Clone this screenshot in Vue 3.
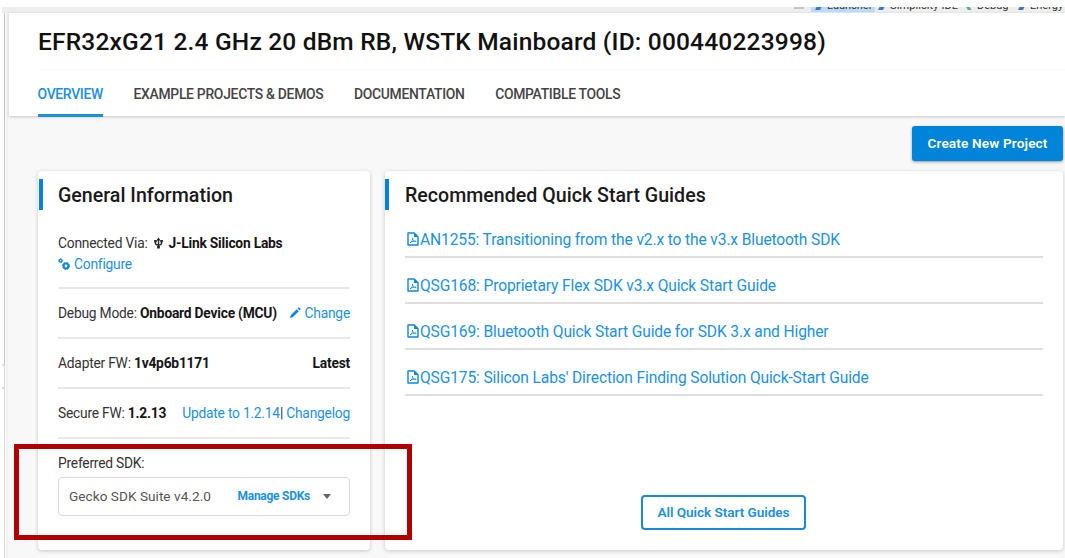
<script setup>
const tabs = [
  { label: 'OVERVIEW', cls: 't1 active' },
  { label: 'EXAMPLE PROJECTS & DEMOS', cls: 't2' },
  { label: 'DOCUMENTATION', cls: 't3' },
  { label: 'COMPATIBLE TOOLS', cls: 't4' },
]
const guides = [
  'AN1255: Transitioning from the v2.x to the v3.x Bluetooth SDK',
  'QSG168: Proprietary Flex SDK v3.x Quick Start Guide',
  'QSG169: Bluetooth Quick Start Guide for SDK 3.x and Higher',
  "QSG175: Silicon Labs' Direction Finding Solution Quick-Start Guide",
]
</script>

<template>
  <div class="window">
    <div class="perspectives">
      <i class="grip"></i>
      <span class="persp launcher"><b class="glyph"></b>Launcher</span>
      <span class="persp ide"><b class="glyph"></b>Simplicity IDE</span>
      <span class="persp debug"><b class="glyph green"></b>Debug</span>
      <span class="persp energy"><b class="glyph"></b>Energy</span>
    </div>
    <div class="body">
      <div class="gutter"><div class="pane top"></div><div class="pane mid"></div><div class="pane rest"></div></div>
      <main>
        <header>
          <h1>EFR32xG21 2.4 GHz 20 dBm RB, WSTK Mainboard (ID: 000440223998)</h1>
          <nav><a v-for="t in tabs" :key="t.label" :class="t.cls">{{ t.label }}</a></nav>
        </header>
        <div class="actions"><button class="create">Create New Project</button></div>
        <div class="cards">
          <section class="card info">
            <h2>General Information</h2>
            <div class="row connected">
              <div class="line"><span>Connected Via:</span>
                <svg class="usb" viewBox="0 0 10 12"><path d="M5 1v10M1.6 4v2.2Q1.6 7.8 5 8.3 8.4 7.8 8.4 6.2V4" fill="none" stroke="#222" stroke-width="1.5"/><path d="M5 0L7.2 3.2H2.8zM.2 2.8h2.8v2.4H.2zM7 2.8h2.8v2.4H7zM3.5 9.4h3V12h-3z" fill="#222"/></svg>
                <b>J-Link Silicon Labs</b></div>
              <div class="line"><svg class="gears" viewBox="0 0 12 12"><g fill="none" stroke="#0d87dc"><circle cx="2.6" cy="2.6" r="1.3" stroke-width="1.3"/><circle cx="2.6" cy="2.6" r="2" stroke-width=".7" stroke-dasharray="1 .57"/><circle cx="8" cy="8" r="2.4" stroke-width="2"/><circle cx="8" cy="8" r="3.5" stroke-width="1" stroke-dasharray="1.5 1.25"/></g></svg><a class="configure">Configure</a></div>
            </div>
            <div class="row"><span>Debug Mode: <b>Onboard Device (MCU)</b></span>
              <span class="end"><svg class="pencil" viewBox="0 0 12 12"><path d="M1 11l.7-2.7 6.1-6.1 2 2-6.1 6.1zM8.5 1.5l.9-.9q.5-.4 1 .1l.9.9q.5.5.1 1l-.9.9z" fill="#0d87dc"/></svg><a class="change">Change</a></span></div>
            <div class="row"><span>Adapter FW: <b>1v4p6b1171</b></span><b>Latest</b></div>
            <div class="row"><span>Secure FW: <b>1.2.13</b></span><span><a>Update to 1.2.14</a>| <a>Changelog</a></span></div>
            <div class="preferred">Preferred SDK:</div>
            <div class="select"><span class="sdk">Gecko SDK Suite v4.2.0</span><a class="manage">Manage SDKs</a><i class="caret"></i></div>
          </section>
          <section class="card quick">
            <h2>Recommended Quick Start Guides</h2>
            <div v-for="g in guides" :key="g" class="guide">
              <svg viewBox="0 0 12 14"><path d="M1 1h6.3L11 4.7V13H1z" fill="none" stroke="#0d87dc" stroke-width="1.4" stroke-linejoin="round"/><path d="M7 1v4h4z" fill="#0d87dc"/><path d="M3 10.8C5 10 6 7.5 5.5 6 5.2 7.7 7 9.5 9.2 9.4 7 8.9 4.6 9.6 3 10.8z" fill="none" stroke="#0d87dc" stroke-width=".8"/></svg>
              <a>{{ g }}</a>
            </div>
            <div class="all"><button>All Quick Start Guides</button></div>
          </section>
        </div>
      </main>
    </div>
    <div class="highlight"></div>
  </div>
</template>

<style>
html, body { margin: 0; overflow: hidden; }
</style>
<style scoped>
* { box-sizing: border-box; }
.window { position: relative; width: 1065px; height: 558px; padding-top: 7px; background: #fff; overflow: hidden; font: 13.8px/16px Roboto, "Liberation Sans", sans-serif; letter-spacing: -.22px; color: #333; }
.perspectives { display: flex; align-items: flex-end; justify-content: flex-start; height: 6px; margin-left: 2px; padding-left: 792px; background: #eee; overflow: hidden; font-size: 11px; line-height: 12px; letter-spacing: 0; color: #333; }
.grip { width: 10px; height: 2px; margin: 0 7px 4px 0; background: #c5c5bd; flex: none; }
.persp { display: flex; align-items: center; height: 12px; flex: none; white-space: nowrap; transform: translateY(-1px); }
.glyph { width: 7px; height: 4px; margin-right: 5px; background: #3974cf; transform: translateY(2px) skewX(-25deg) scaleX(.7); }
.glyph.green { background: #62a889; transform: translateY(2px) skewX(30deg) scaleX(.5); }
.launcher { width: 64px; padding-left: 4px; background: #badcfa; }
.ide { margin-left: 3px; width: 87px; letter-spacing: .1px; }
.debug { width: 53px; }
.energy { width: 55px; }
.body { display: flex; height: 545px; }
.gutter { width: 9px; padding-left: 2px; display: flex; flex-direction: column; background: linear-gradient(90deg, #fff 0 5px, #f0f0f0 7px, #fafafa 9px); }
.pane { width: 3px; border-right: 1px solid #c4c4c4; }
.pane.top { height: 353px; border-bottom: 2px solid #ddd; }
.pane.mid { height: 23px; border-bottom: 2px solid #ddd; border-right-color: #ddd; }
.pane.rest { flex: 1; border-right-color: #ddd; }
main { flex: 1; background: #f8f8f8; }
header { position: relative; height: 103px; background: #fff; padding-left: 29px; box-shadow: 0 1px 3px rgba(0,0,0,.2); }
h1 { margin: 0; height: 57px; font-size: 24.5px; line-height: 58px; font-weight: 500; letter-spacing: .19px; color: #111; white-space: nowrap; border-bottom: 1px solid #fafafa; }
nav { display: flex; gap: 30.5px; height: 47px; margin-left: -.5px; }
nav a { height: 46.5px; line-height: 48px; font-size: 13.9px; letter-spacing: -.29px; font-weight: 500; color: #444; white-space: nowrap; }
nav .active { color: #1a8fe3; border-bottom: 3px solid #1a8fe3; }
.actions { display: flex; justify-content: flex-end; height: 55px; padding: 10px 2px 0 0; }
button { height: 35px; border-radius: 3px; font: 600 13.6px Roboto, sans-serif; padding: 0 0 1px; white-space: nowrap; }
.create { width: 151px; border: 0; background: #0084d9; color: #fff; box-shadow: 0 1px 3px rgba(0,0,0,.4); letter-spacing: .15px; }
.cards { display: flex; gap: 15px; padding-left: 29px; height: 379px; }
.card { position: relative; background: #fff; border-radius: 4px; box-shadow: 0 1px 4px rgba(0,0,0,.2); padding: 8px 20px 0; display: flex; flex-direction: column; }
.info { width: 332px; }
.quick { width: 678px; }
h2 { margin: 0 -20px 0 -19px; padding-left: 15px; height: 31px; border-left: 4px solid #0084d9; font-size: 19.6px; line-height: 33px; font-weight: 500; letter-spacing: .01px; color: #191919; white-space: nowrap; }
.quick h2 { margin-left: -20px; padding-left: 16px; }
.row { height: 50px; border-bottom: 2px solid #e8e8e8; display: flex; align-items: center; justify-content: space-between; white-space: nowrap; }
.row b { color: #151515; }
b { font-weight: 700; }
a { color: #1b91e3; }
.connected { height: 79px; flex-direction: column; align-items: flex-start; justify-content: flex-end; padding-bottom: 13px; }
.line { display: flex; height: 20.5px; align-items: center; }
.usb { width: 9px; height: 12px; margin: 0 6px 0 6px; }
.gears { width: 12px; height: 12px; margin-right: 4px; }
.end { display: flex; align-items: center; }
.pencil { width: 12px; height: 12px; margin-right: 4px; }
.preferred { height: 38px; padding-top: 15px; line-height: 18px; }
.select { display: flex; align-items: center; height: 39px; border: 1px solid #dadada; border-radius: 4px; padding: 0 18px 1px 10px; white-space: nowrap; }
.sdk { flex: 1; font-size: 13.6px; letter-spacing: .04px; color: #555; }
.manage { font-size: 12px; letter-spacing: -.26px; font-weight: 700; margin-right: 13px; }
.caret { border: 4.5px solid transparent; border-top: 5px solid #666; border-bottom: 0; }
.guide { height: 46px; flex: none; border-bottom: 2px solid #dedede; display: flex; align-items: flex-end; padding: 0 0 6px 2px; font-size: 15.6px; letter-spacing: -.135px; line-height: 20px; white-space: nowrap; }
h2 + .guide { height: 48px; }
.guide svg { width: 12px; height: 14px; margin: 0 1px 4px 0; }
.all { display: flex; justify-content: center; padding-top: 99px; margin-left: -1px; }
.all button { width: 165px; background: #fff; border: 2px solid #1988d6; color: #1a8fe3; border-radius: 4px; letter-spacing: -.06px; }
.highlight { position: absolute; left: 14px; top: 444px; width: 398px; height: 96px; border: 5px solid #b00000; }
</style>
